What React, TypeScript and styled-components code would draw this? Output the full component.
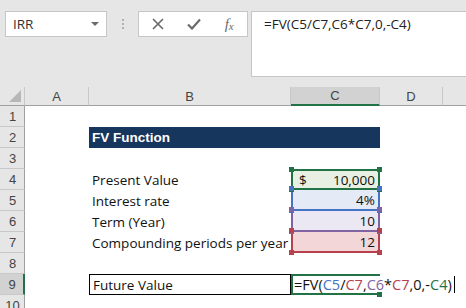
import React from "react";
import styled, { createGlobalStyle, css } from "styled-components";

const GlobalStyle = createGlobalStyle`
  html, body {
    margin: 0;
    padding: 0;
    background: #ffffff;
    overflow: hidden;
  }
`;

type Tone = "green" | "blue" | "purple" | "red";

const tones: Record<Tone, { line: string; fill: string }> = {
  green: { line: "#217346", fill: "#e7f0e3" },
  blue: { line: "#4472c4", fill: "#e4eaf6" },
  purple: { line: "#8064a2", fill: "#ebe8f3" },
  red: { line: "#b8414d", fill: "#f3d6d8" },
};

const rows = [
  { n: 1 },
  { n: 2, title: "FV Function" },
  { n: 3 },
  { n: 4, label: "Present Value", tone: "green" as Tone, dollar: true, value: "10,000" },
  { n: 5, label: "Interest rate", tone: "blue" as Tone, value: "4%" },
  { n: 6, label: "Term (Year)", tone: "purple" as Tone, value: "10" },
  { n: 7, label: "Compounding periods per year", tone: "red" as Tone, value: "12" },
  { n: 8 },
  { n: 9, result: true },
  { n: 10 },
];

const formulaParts: { t: string; tone?: Tone }[] = [
  { t: "=FV(" },
  { t: "C5", tone: "blue" },
  { t: "/" },
  { t: "C7", tone: "red" },
  { t: "," },
  { t: "C6", tone: "purple" },
  { t: "*" },
  { t: "C7", tone: "red" },
  { t: ",0,-" },
  { t: "C4", tone: "green" },
  { t: ")" },
];

const App: React.FC = () => {
  return (
    <Page>
      <GlobalStyle />
      <TopBar>
        <NameBox>
          <span>IRR</span>
          <Caret />
        </NameBox>
        <Grip>
          <i />
          <i />
          <i />
        </Grip>
        <ButtonBox>
          <IconSlot>
            <svg width="12" height="12" viewBox="0 0 12 12">
              <path d="M1 1 L11 11 M11 1 L1 11" stroke="#6b6b6b" strokeWidth="1.7" fill="none" />
            </svg>
          </IconSlot>
          <IconSlot>
            <svg width="14" height="12" viewBox="0 0 14 12">
              <path d="M1 6.5 L5 10.5 L13 1.5" stroke="#6b6b6b" strokeWidth="2.2" fill="none" />
            </svg>
          </IconSlot>
          <IconSlot>
            <Fx>
              f<sub>x</sub>
            </Fx>
          </IconSlot>
        </ButtonBox>
        <FormulaBox>=FV(C5/C7,C6*C7,0,-C4)</FormulaBox>
      </TopBar>

      <Sheet>
        <Corner>
          <CornerMark />
        </Corner>
        <ColHead>A</ColHead>
        <ColHead>B</ColHead>
        <ColHead $active>C</ColHead>
        <ColHead>D</ColHead>
        <ColHead $last />

        {rows.map((r) => (
          <React.Fragment key={r.n}>
            <RowHead $active={r.n === 9}>{r.n}</RowHead>
            <Cell />
            {r.title ? (
              <>
                <TitleBar>{r.title}</TitleBar>
                <Cell />
              </>
            ) : r.result ? (
              <>
                <LabelCell $boxed>Future Value</LabelCell>
                <EditCell>
                  <EditText>
                    {formulaParts.map((p, i) => (
                      <Ref key={i} $tone={p.tone}>
                        {p.t}
                      </Ref>
                    ))}
                    <Cursor />
                  </EditText>
                  <Handle $pos="br" $tone="green" />
                </EditCell>
                <Cell />
              </>
            ) : r.label && r.tone ? (
              <>
                <LabelCell>{r.label}</LabelCell>
                <ValueCell $tone={r.tone}>
                  {r.dollar && <span>$</span>}
                  <Amount>{r.value}</Amount>
                  <Handle $pos="tl" $tone={r.tone} />
                  <Handle $pos="tr" $tone={r.tone} />
                  <Handle $pos="bl" $tone={r.tone} />
                  <Handle $pos="br" $tone={r.tone} />
                </ValueCell>
                <Cell />
              </>
            ) : (
              <>
                <Cell />
                <Cell />
                <Cell />
              </>
            )}
            <Cell />
          </React.Fragment>
        ))}
      </Sheet>
    </Page>
  );
};

export default App;

// Styled Components

const Page = styled.div`
  width: 466px;
  height: 308px;
  overflow: hidden;
  background: #ffffff;
  font-family: "Open Sans", "Liberation Sans", sans-serif;
`;

const TopBar = styled.div`
  height: 87px;
  box-sizing: border-box;
  background: #e6e6e6;
  display: flex;
  align-items: flex-start;
  padding: 11px 0 0 5px;
`;

const boxBorder = css`
  box-sizing: border-box;
  background: #ffffff;
  border: 1px solid #c6c6c6;
`;

const NameBox = styled.div`
  ${boxBorder};
  width: 102px;
  height: 26px;
  display: flex;
  align-items: center;
  justify-content: space-between;
  padding: 0 7px 0 7px;
  font-size: 13.5px;
  color: #333333;
`;

const Caret = styled.span`
  width: 0;
  height: 0;
  border-left: 4px solid transparent;
  border-right: 4px solid transparent;
  border-top: 4px solid #6b6b6b;
`;

const Grip = styled.div`
  width: 31px;
  height: 26px;
  display: flex;
  flex-direction: column;
  align-items: center;
  justify-content: center;
  gap: 2px;

  i {
    width: 2px;
    height: 2px;
    background: #b0b0b0;
  }
`;

const ButtonBox = styled.div`
  ${boxBorder};
  width: 110px;
  height: 26px;
  display: flex;
  align-items: center;
  padding-left: 1px;
  margin-right: 3px;
`;

const IconSlot = styled.div`
  width: 36px;
  display: flex;
  align-items: center;
  justify-content: center;
`;

const Fx = styled.span`
  font-family: "Liberation Serif", serif;
  font-style: italic;
  font-size: 15px;
  color: #6b6b6b;
  line-height: 1;

  sub {
    font-size: 11px;
    vertical-align: -1px;
  }
`;

const FormulaBox = styled.div`
  ${boxBorder};
  flex: 1;
  height: 66px;
  border-right: none;
  padding: 3px 0 0 12px;
  font-size: 13.5px;
  color: #222222;
`;

const Sheet = styled.div`
  display: grid;
  grid-template-columns: 25px 64px 202px 89px 63px 1fr;
  grid-template-rows: 19px repeat(10, 21px);
`;

const Corner = styled.div`
  background: #e6e6e6;
  border-right: 1px solid #c8c8c8;
  border-bottom: 1px solid #a0a0a0;
  position: relative;
`;

const CornerMark = styled.div`
  position: absolute;
  right: 3px;
  bottom: 3px;
  width: 0;
  height: 0;
  border-left: 12px solid transparent;
  border-bottom: 12px solid #b7b7b7;
`;

const ColHead = styled.div<{ $active?: boolean; $last?: boolean }>`
  box-sizing: border-box;
  background: ${(p) => (p.$active ? "#d2d2d2" : "#e6e6e6")};
  border-right: ${(p) => (p.$last ? "none" : "1px solid #c8c8c8")};
  border-bottom: ${(p) => (p.$active ? "2px solid #217346" : "1px solid #a0a0a0")};
  display: flex;
  align-items: center;
  justify-content: center;
  font-family: "Liberation Sans", sans-serif;
  font-size: 13px;
  color: #444444;
`;

const RowHead = styled.div<{ $active?: boolean }>`
  box-sizing: border-box;
  background: ${(p) => (p.$active ? "#d2d2d2" : "#e6e6e6")};
  border-right: ${(p) => (p.$active ? "2px solid #217346" : "1px solid #a0a0a0")};
  border-bottom: 1px solid #c8c8c8;
  display: flex;
  align-items: center;
  justify-content: center;
  font-family: "Liberation Sans", sans-serif;
  font-size: 13px;
  color: #444444;
  padding-left: 1px;
`;

const Cell = styled.div`
  background: #ffffff;
`;

const TitleBar = styled.div`
  grid-column: span 2;
  background: #17365d;
  color: #ffffff;
  font-family: "Liberation Sans", sans-serif;
  font-weight: bold;
  font-size: 13.5px;
  display: flex;
  align-items: center;
  padding-left: 3px;
`;

const LabelCell = styled.div<{ $boxed?: boolean }>`
  box-sizing: border-box;
  display: flex;
  align-items: center;
  padding-left: 3px;
  font-size: 13.5px;
  color: #111111;
  white-space: nowrap;
  border: ${(p) => (p.$boxed ? "1px solid #000000" : "none")};
`;

const ValueCell = styled.div<{ $tone: Tone }>`
  position: relative;
  box-sizing: border-box;
  background: ${(p) => tones[p.$tone].fill};
  border-left: 2px solid ${(p) => tones[p.$tone].line};
  border-right: 2px solid ${(p) => tones[p.$tone].line};
  border-top: ${(p) => (p.$tone === "green" ? `2px solid ${tones.green.line}` : "none")};
  border-bottom: 2px solid ${(p) => tones[p.$tone].line};
  display: flex;
  align-items: center;
  padding: 0 3px 0 6px;
  font-size: 13.5px;
  color: #111111;
`;

const Amount = styled.span`
  margin-left: auto;
`;

const Handle = styled.span<{ $pos: "tl" | "tr" | "bl" | "br"; $tone: Tone }>`
  position: absolute;
  width: 5px;
  height: 5px;
  background: ${(p) => tones[p.$tone].line};
  z-index: 2;
  ${(p) => (p.$pos[0] === "t" ? "top: -4px;" : "bottom: -4px;")}
  ${(p) => (p.$pos[1] === "l" ? "left: -4px;" : "right: -4px;")}
`;

const EditCell = styled.div`
  position: relative;
  box-sizing: border-box;
  border: 2px solid #217346;
  background: #ffffff;
  overflow: visible;
`;

const EditText = styled.div`
  position: absolute;
  left: 1px;
  top: 0;
  bottom: 0;
  display: flex;
  align-items: center;
  white-space: nowrap;
  font-size: 14.5px;
  background: #ffffff;
  z-index: 1;
  padding-right: 2px;
`;

const Ref = styled.span<{ $tone?: Tone }>`
  color: ${(p) => (p.$tone ? tones[p.$tone].line : "#111111")};
`;

const Cursor = styled.span`
  width: 1px;
  height: 17px;
  background: #000000;
  margin-left: 2px;
`;
